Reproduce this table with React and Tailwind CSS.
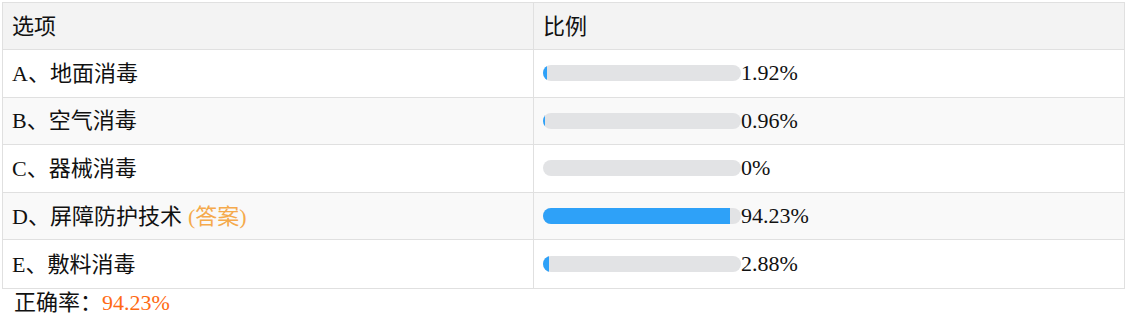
const rows = [
  { label: "A、地面消毒", pct: 1.92, text: "1.92%" },
  { label: "B、空气消毒", pct: 0.96, text: "0.96%" },
  { label: "C、器械消毒", pct: 0, text: "0%" },
  { label: "D、屏障防护技术", pct: 94.23, text: "94.23%", answer: true },
  { label: "E、敷料消毒", pct: 2.88, text: "2.88%" },
];

function Bar({ pct }) {
  return (
    <div className="w-[198px] h-4 shrink-0 rounded-full bg-[#e2e3e5] overflow-hidden">
      <div className="h-full bg-[#2ea1f8]" style={{ width: `${pct}%` }} />
    </div>
  );
}

export default function App() {
  return (
    <div
      className="w-[1127px] h-[314px] bg-white pt-[2px] px-[2px] text-[22px] text-[#111]"
      style={{ fontFamily: '"Liberation Serif", "Noto Sans CJK SC", serif' }}
    >
      <div className="border border-[#e0e0e0]">
        {/* header */}
        <div className="grid grid-cols-[531px_1fr] h-[47px] bg-[#f3f3f3] border-b border-[#e0e0e0]">
          <div className="flex items-center pl-[9px] border-r border-[#e0e0e0]">选项</div>
          <div className="flex items-center pl-[9px]">比例</div>
        </div>

        {rows.map((r, i) => (
          <div
            key={r.label}
            className={
              "grid grid-cols-[531px_1fr] h-[47.6px] " +
              (i % 2 === 1 ? "bg-[#f9f9f9] " : "bg-white ") +
              (i < rows.length - 1 ? "border-b border-[#e0e0e0]" : "")
            }
          >
            <div className="flex items-center pl-[9px] border-r border-[#e0e0e0]">
              <span>{r.label}</span>
              {r.answer && <span className="ml-[6px] text-[#f5aa4c]">(答案)</span>}
            </div>
            <div className="flex items-center pl-[9px]">
              <Bar pct={r.pct} />
              <span className="leading-none">{r.text}</span>
            </div>
          </div>
        ))}
      </div>

      {/* footer */}
      <div className="pl-3 leading-[27px]">
        正确率：<span className="text-[#ff6a13]">94.23%</span>
      </div>
    </div>
  );
}
